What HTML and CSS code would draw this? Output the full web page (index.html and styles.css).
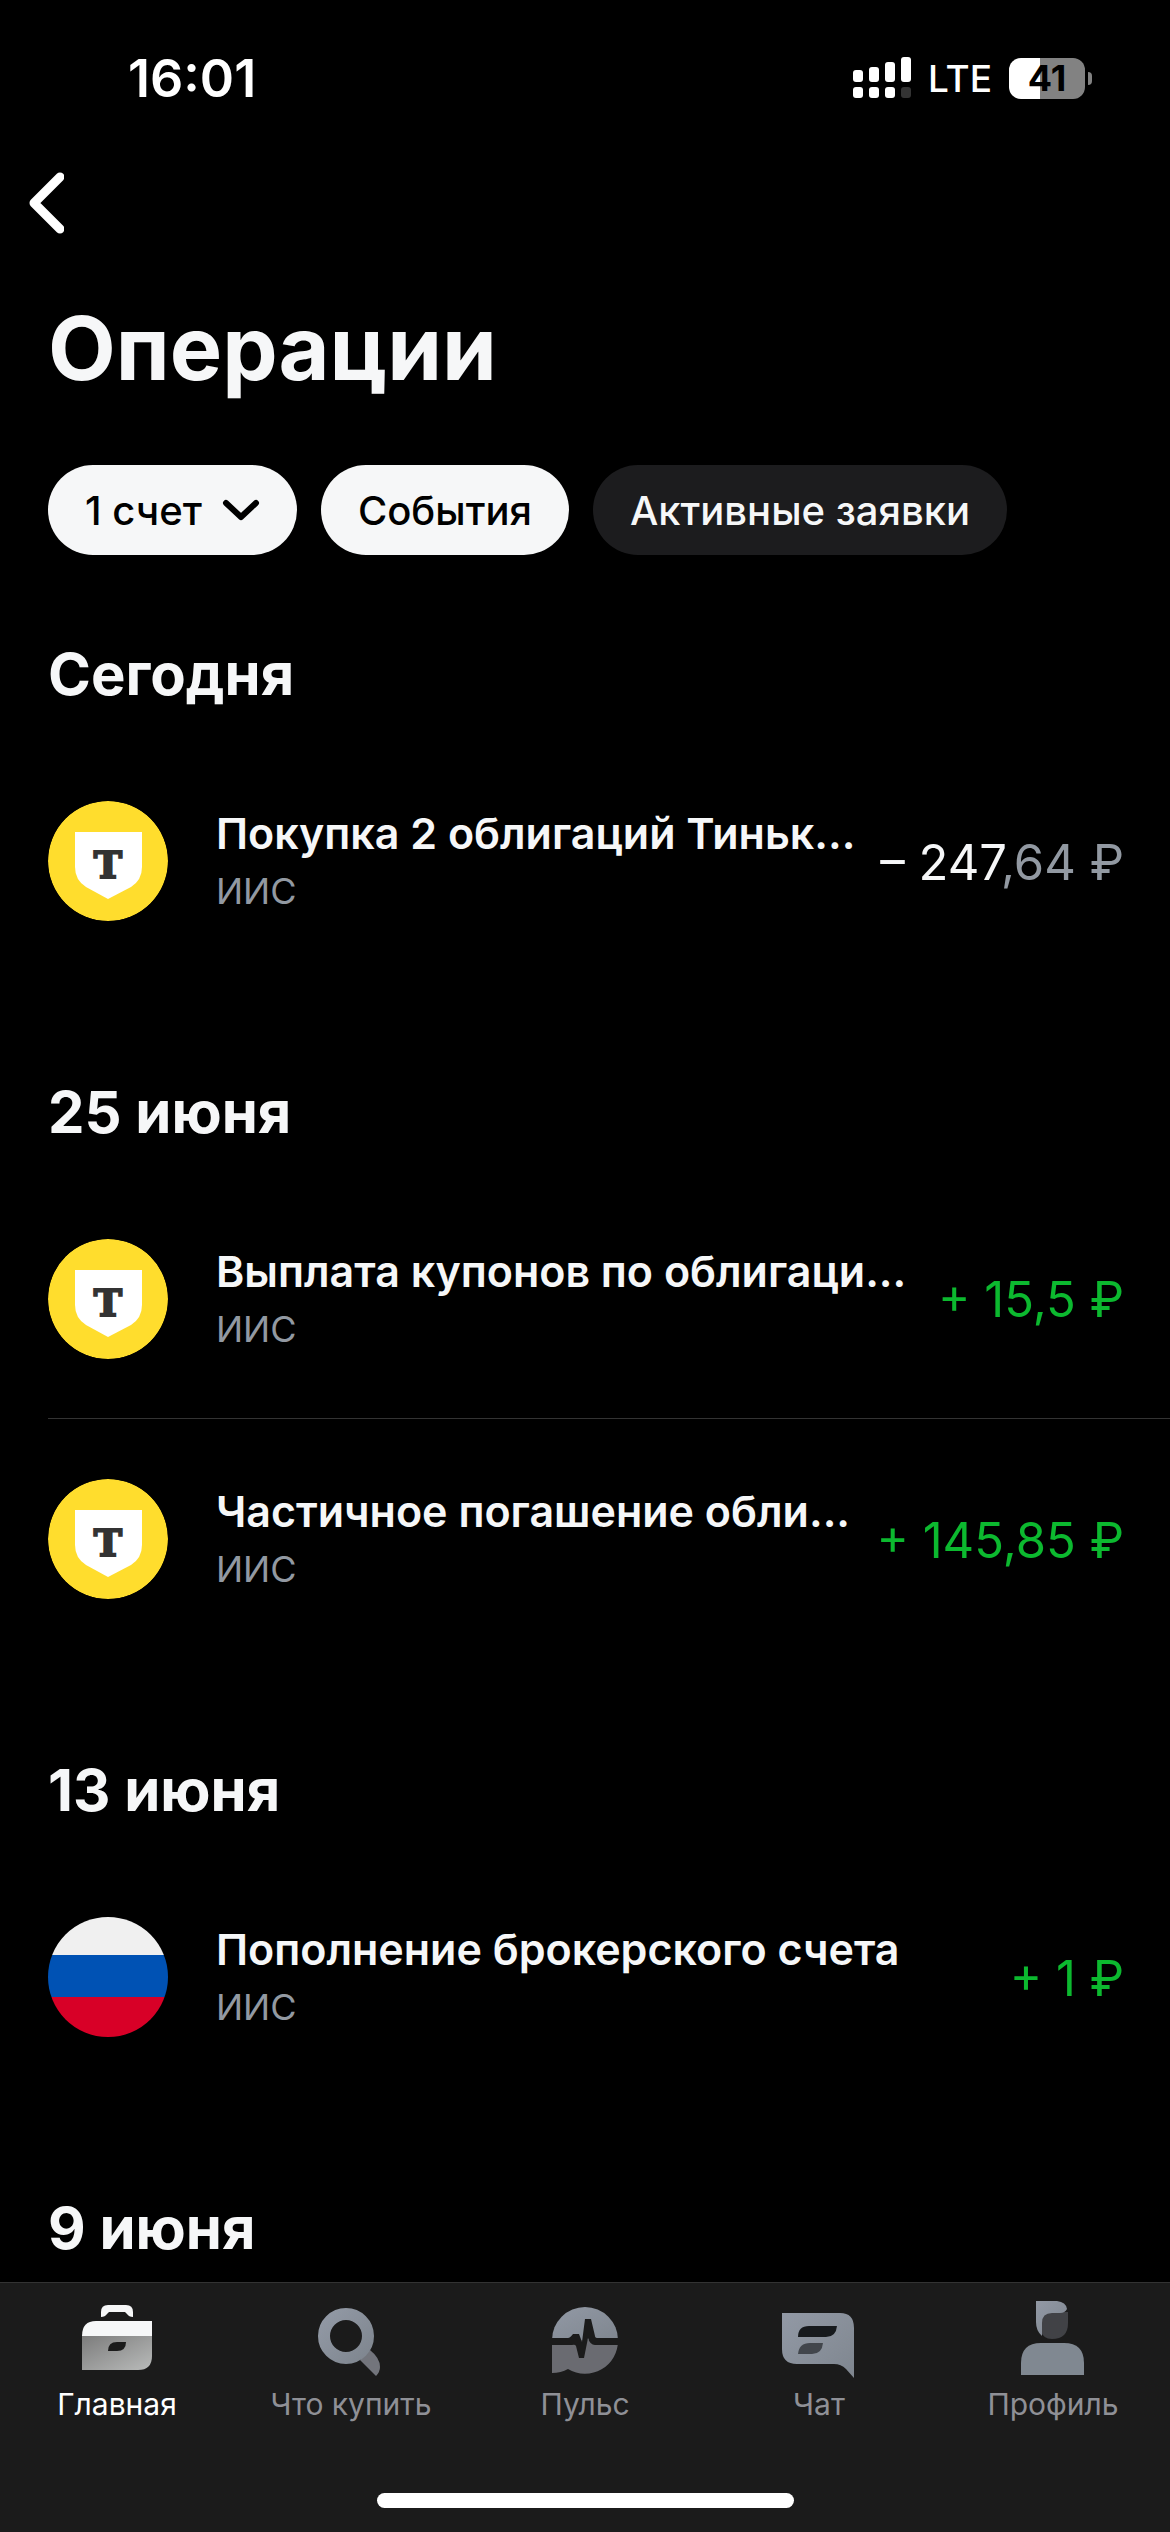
FILE: index.html
```html
<!DOCTYPE html>
<html lang="ru">
   <head>
      <meta charset="UTF-8">
      <meta name="viewport" content="width=device-width, initial-scale=1.0">
      <title>Операции</title>
      <link rel="stylesheet" href="styles.css">
   </head>
   <body>
      <div class="statusbar">
         <span class="time">16:01</span>
         <div class="status-right">
            <svg class="signal" width="58" height="42" viewBox="0 0 58 42" fill="#fff">
               <rect x="0" y="13" width="10" height="12" rx="3"/>
               <rect x="16" y="10" width="10" height="15" rx="3"/>
               <rect x="32" y="5" width="10" height="20" rx="3"/>
               <rect x="48" y="0" width="10" height="25" rx="3"/>
               <rect x="0" y="30" width="10" height="11" rx="3"/>
               <rect x="16" y="30" width="10" height="11" rx="3"/>
               <rect x="32" y="30" width="10" height="11" rx="3"/>
               <rect x="48" y="30" width="10" height="11" rx="3" fill="#333"/>
            </svg>
            <span class="network">LTE</span>
            <div class="battery">
               <span class="battery-level">41</span>
               <span class="battery-tip"></span>
            </div>
         </div>
      </div>
      <header class="topbar">
         <button type="button" class="back" aria-label="Назад">
            <svg width="36" height="62" viewBox="0 0 36 62" fill="none" stroke="#fff" stroke-width="9" stroke-linecap="round" stroke-linejoin="round">
               <path d="M32 5 L6 31 L32 57"/>
            </svg>
         </button>
      </header>
      <main>
         <h1>Операции</h1>
         <div class="filters">
            <button type="button" class="chip active">1 счет
               <svg width="38" height="24" viewBox="0 0 38 24" fill="none" stroke="#000" stroke-width="6" stroke-linecap="round" stroke-linejoin="round">
                  <path d="M4 5 L19 19 L34 5"/>
               </svg>
            </button>
            <button type="button" class="chip active">События</button>
            <button type="button" class="chip">Активные заявки</button>
         </div>

         <section class="day">
            <h2>Сегодня</h2>
            <a href="#" class="operation">
               <svg class="logo" viewBox="0 0 120 120"><use href="#tbank"/></svg>
               <div class="info">
                  <div class="name">Покупка 2 облигаций Тиньк...</div>
                  <div class="account">ИИС</div>
               </div>
               <div class="amount">– 247<span class="kopecks">,64 ₽</span></div>
            </a>
         </section>

         <section class="day">
            <h2>25 июня</h2>
            <a href="#" class="operation">
               <svg class="logo" viewBox="0 0 120 120"><use href="#tbank"/></svg>
               <div class="info">
                  <div class="name">Выплата купонов по облигаци...</div>
                  <div class="account">ИИС</div>
               </div>
               <div class="amount plus">+ 15,5 ₽</div>
            </a>
            <a href="#" class="operation">
               <svg class="logo" viewBox="0 0 120 120"><use href="#tbank"/></svg>
               <div class="info">
                  <div class="name">Частичное погашение обли...</div>
                  <div class="account">ИИС</div>
               </div>
               <div class="amount plus">+ 145,85 ₽</div>
            </a>
         </section>

         <section class="day">
            <h2>13 июня</h2>
            <a href="#" class="operation">
               <div class="logo flag"></div>
               <div class="info">
                  <div class="name">Пополнение брокерского счета</div>
                  <div class="account">ИИС</div>
               </div>
               <div class="amount plus">+ 1 ₽</div>
            </a>
         </section>

         <section class="day">
            <h2>9 июня</h2>
         </section>
      </main>

      <nav class="tabbar">
         <div class="tabs">
            <a href="#" class="tab current">
               <svg viewBox="0 0 78 78">
                  <path fill="#f6f7f8" d="M23 17 V12 Q23 5 30 5 H48 Q55 5 55 12 V17 Q51 17 49 14 L47 12 H31 L29 14 Q27 17 23 17 Z"/>
                  <path fill="#f6f7f8" d="M4 36 Q4 21 18 21 H74 V36 Z"/>
                  <path fill="url(#caseFill)" d="M4 36 H74 V56 Q74 70 60 70 H4 Z"/>
                  <path fill="#1b1b1b" d="M30 51 Q30 42 39 42 H48 Q48 51 39 51 Z"/>
               </svg>
               <span>Главная</span>
            </a>
            <a href="#" class="tab">
               <svg viewBox="0 0 78 78">
                  <path fill="#73757c" d="M48 60 L58 50 Q68 58 68 67 Q68 72 64 76 Z"/>
                  <circle cx="34" cy="36" r="22" fill="none" stroke="url(#greyFill)" stroke-width="12"/>
               </svg>
               <span>Что купить</span>
            </a>
            <a href="#" class="tab">
               <svg viewBox="0 0 78 78">
                  <path fill="url(#greyFill)" d="M6 40 A33 33 0 0 1 72 40 Z"/>
                  <path fill="#6a6b71" d="M6 40 H72 A33 33 0 0 1 22 69 Q15 73 6 73 Z"/>
                  <path fill="#1b1b1b" d="M5 38 H22 Q24 38 27 34 H33 L36 42 L39 19 H45 L49 36 Q49 38 52 38 H73 V45 H49 Q44 45 42 38 L38 58 H33 L30 46 Q29 44 26 45 H5 Z"/>
               </svg>
               <span>Пульс</span>
            </a>
            <a href="#" class="tab">
               <svg viewBox="0 0 78 78">
                  <path fill="url(#greyFill)" d="M2 13 H60 Q74 13 74 28 V78 L66 69 Q61 64 54 64 H17 Q2 64 2 49 Z"/>
                  <path fill="#171a1d" d="M18 37 Q18 26 29 26 H57 Q56 37 46 37 Z"/>
                  <path fill="#42464c" d="M18 54 Q19 43 30 43 H43 Q42 54 32 54 Z"/>
               </svg>
               <span>Чат</span>
            </a>
            <a href="#" class="tab">
               <svg viewBox="0 0 78 78">
                  <path fill="#414246" d="M28 12 H54 V23 Q54 39 38 39 Q29 39 26 30 Z"/>
                  <path fill="url(#greyFill)" d="M22 1 H43 Q52 2 53 9 Q51 13 46 13 H38 Q28 13 28 23 V36 Q22 31 22 22 Z"/>
                  <path fill="#808891" d="M7 75 V63 Q7 43 27 43 H50 Q70 43 70 63 V75 Z"/>
               </svg>
               <span>Профиль</span>
            </a>
         </div>
         <div class="home-indicator"></div>
      </nav>

      <!-- shared shapes and gradients -->
      <svg class="defs" width="0" height="0">
         <defs>
            <linearGradient id="caseFill" x1="0" y1="0" x2="1" y2="1">
               <stop offset="0" stop-color="#7c7c7c"/>
               <stop offset="1" stop-color="#b9bbba"/>
            </linearGradient>
            <linearGradient id="greyFill" x1="0" y1="0" x2="1" y2="1">
               <stop offset="0" stop-color="#9299a5"/>
               <stop offset="1" stop-color="#7f868f"/>
            </linearGradient>
            <symbol id="tbank" viewBox="0 0 120 120">
               <circle cx="60" cy="60" r="60" fill="#ffdd2d"/>
               <path fill="#fff" d="M27 31 H94 V66 Q94 79 83 86 L60 98 L38 86 Q27 79 27 66 Z"/>
               <text x="60" y="77" text-anchor="middle" class="logo-letter">T</text>
            </symbol>
         </defs>
      </svg>
   </body>
</html>
```
FILE: styles.css
```css
*{
box-sizing: border-box;
}
body{
margin: 0;
height: 100vh;
display: flex;
flex-direction: column;
background-color: #000;
color: #f6f7f8;
font-family: Inter, "Liberation Sans", sans-serif;
}
a{
color: inherit;
text-decoration: none;
}
button{
border: none;
font-family: inherit;
cursor: pointer;
}
.statusbar{
height: 156px;
padding: 0 77px 0 128px;
display: flex;
align-items: center;
justify-content: space-between;
color: #fff;
}
.time{
font-size: 52px;
font-weight: 600;
}
.status-right{
display: flex;
align-items: center;
gap: 17px;
}
.network{
font-size: 37px;
font-weight: 500;
}
.battery{
position: relative;
width: 76px;
height: 41px;
margin-right: 8px;
border-radius: 12px;
background: linear-gradient(to right, #fff 41%, #828282 41%);
display: flex;
align-items: center;
justify-content: center;
}
.battery-level{
font-size: 36px;
font-weight: 700;
color: #000;
}
.battery-tip{
position: absolute;
right: -7px;
top: 14px;
width: 4px;
height: 13px;
border-radius: 0 4px 4px 0;
background-color: #828282;
}
.topbar{
height: 94px;
padding-left: 28px;
display: flex;
align-items: center;
}
.back{
display: flex;
padding: 0;
background: none;
}
main{
flex: 1;
min-height: 0;
overflow: hidden;
padding: 44px 0 0 48px;
}
h1{
margin: 0;
font-size: 88px;
line-height: 108px;
font-weight: 700;
}
.filters{
display: flex;
gap: 24px;
margin: 63px 0 83px;
}
.chip{
display: flex;
align-items: center;
gap: 20px;
height: 90px;
padding: 0 37px;
border-radius: 45px;
background-color: #1c1c1e;
color: #f6f7f8;
font-size: 40px;
font-weight: 500;
}
.chip.active{
background-color: #f6f7f8;
color: #000;
}
h2{
margin: 0 0 31px;
font-size: 58px;
line-height: 72px;
font-weight: 700;
}
.day{
margin-bottom: 95px;
}
.operation{
display: flex;
align-items: center;
height: 240px;
padding-right: 46px;
}
.operation:not(:last-child){
border-bottom: 1px solid #333;
}
.logo{
width: 120px;
height: 120px;
flex-shrink: 0;
border-radius: 50%;
}
.logo-letter{
font-family: "DejaVu Serif", serif;
font-size: 38px;
font-weight: 700;
fill: #333;
stroke: #333;
stroke-width: 2px;
}
.flag{
background: linear-gradient(#f0f0f0 32%, #0052b4 32%, #0052b4 67%, #d80027 67%);
}
.info{
flex: 1;
min-width: 0;
margin: 4px 20px 0 48px;
}
.name{
font-size: 43px;
line-height: 56px;
font-weight: 600;
white-space: nowrap;
overflow: hidden;
text-overflow: ellipsis;
}
.account{
font-size: 36px;
line-height: 60px;
color: #9299a2;
}
.amount{
padding-top: 2px;
font-size: 49px;
white-space: nowrap;
}
.kopecks{
color: #9299a2;
}
.plus{
color: #0cb92f;
}
.tabbar{
height: 250px;
padding-top: 17px;
border-top: 1px solid #333;
background-color: #1b1b1b;
}
.tabs{
display: flex;
}
.tab{
flex: 1;
display: flex;
flex-direction: column;
align-items: center;
font-size: 30px;
line-height: 36px;
color: #8f9096;
}
.tab svg{
width: 78px;
height: 78px;
margin-bottom: 8px;
}
.tab.current{
color: #fff;
}
.home-indicator{
width: 417px;
height: 15px;
margin: 71px auto 0;
border-radius: 8px;
background-color: #fff;
}
.defs{
position: absolute;
}
```
